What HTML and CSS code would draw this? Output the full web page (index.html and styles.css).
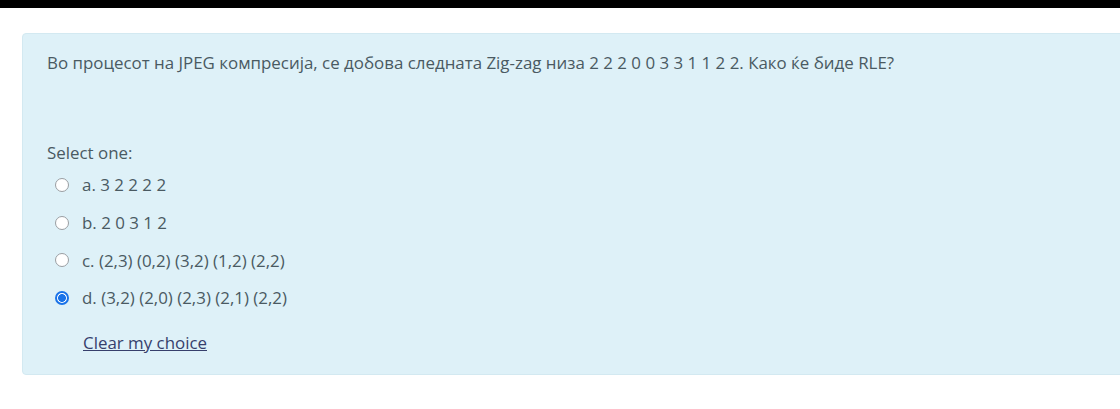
FILE: index.html
```html
<!DOCTYPE html>
<html lang="mk">
<head>
<meta charset="utf-8">
<title>Question</title>
<link rel="stylesheet" href="styles.css">
</head>
<body>
<div class="topbar"></div>
<main class="page">
  <section class="formulation">
    <p class="qtext">Во процесот на JPEG компресија, се добова следната Zig-zag низа 2 2 2 0 0 3 3 1 1 2 2. Како ќе биде RLE?</p>
    <div class="ablock">
      <div class="prompt">Select one:</div>
      <div class="answer">
        <label class="opt"><span class="radio"></span><span class="lbl">a. 3 2 2 2 2</span></label>
        <label class="opt"><span class="radio"></span><span class="lbl">b. 2 0 3 1 2</span></label>
        <label class="opt"><span class="radio"></span><span class="lbl">c. (2,3) (0,2) (3,2) (1,2) (2,2)</span></label>
        <label class="opt"><span class="radio checked"></span><span class="lbl">d. (3,2) (2,0) (2,3) (2,1) (2,2)</span></label>
      </div>
      <a class="clear" href="#">Clear my choice</a>
    </div>
  </section>
</main>
</body>
</html>
```

FILE: styles.css
```css
html, body {
  margin: 0;
  padding: 0;
  background: #ffffff;
}
body {
  font-family: "Open Sans", "Noto Sans", sans-serif;
  font-size: 16.9px;
  color: #4a5a62;
  overflow: hidden;
}
.topbar {
  height: 8px;
  background: #000000;
}
.page {
  padding: 25px 0 0 22px;
}
.formulation {
  width: 1130px;
  box-sizing: border-box;
  height: 342px;
  background: #def1f8;
  border: 1px solid #d3e9f1;
  border-radius: 4px;
  padding: 18px 0 0 24px;
}
.qtext {
  margin: 0;
  line-height: 22px;
}
.ablock {
  margin-top: 68px;
}
.prompt {
  line-height: 22px;
}
.answer {
  display: flex;
  flex-direction: column;
  margin-top: 2px;
}
.opt {
  display: flex;
  align-items: center;
  height: 37.7px;
  gap: 13px;
  padding-left: 8px;
}
.radio {
  width: 14px;
  height: 14px;
  box-sizing: border-box;
  border: 1px solid #9a9ea2;
  border-radius: 50%;
  background: #ffffff;
}
.radio.checked {
  border: 2px solid #1a73e8;
  background: radial-gradient(circle, #1a73e8 0 3.6px, #ffffff 4.2px);
}
.clear {
  display: inline-block;
  margin-top: 15px;
  margin-left: 36px;
  color: #363f6c;
  text-decoration: underline;
  line-height: 22px;
}
```
